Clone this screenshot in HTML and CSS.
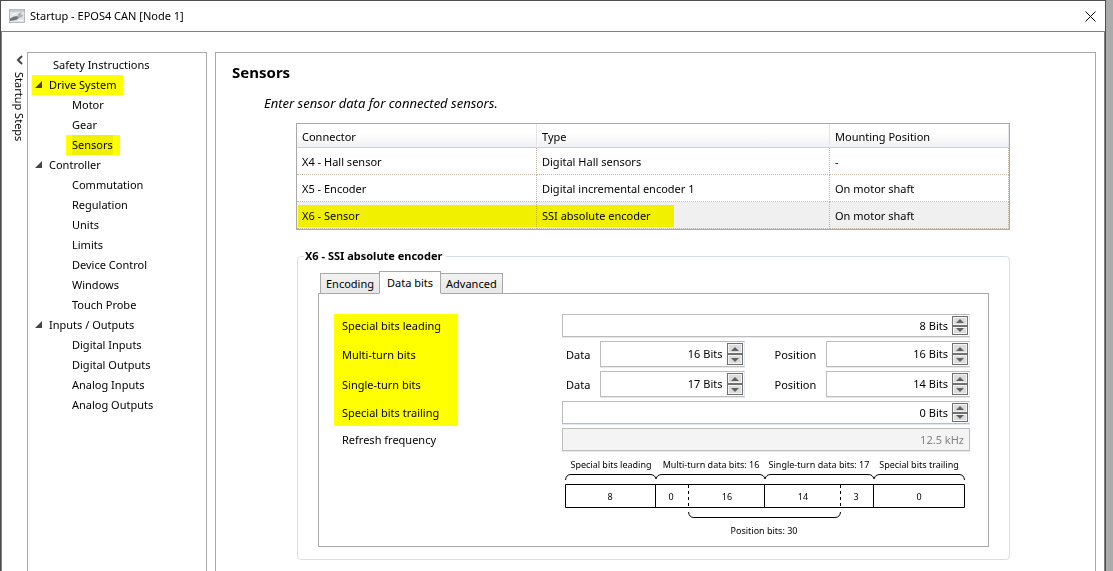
FILE: index.html
```
<!DOCTYPE html>
<html lang="en">
<head>
  <meta charset="UTF-8" />
  <meta name="viewport" content="width=device-width, initial-scale=1.0"/>
  <title>Startup - EPOS4 CAN [Node 1]</title>
  <link rel="stylesheet" href="styles.css">
</head>
<body>
  <div class="window">
    <header class="titlebar">
      <svg class="app-icon" width="16" height="14" viewBox="0 0 16 14">
        <rect x="0.5" y="0.5" width="15" height="13" fill="#e2e6e8" stroke="#b4babf"/>
        <rect x="1" y="1" width="14" height="2" fill="#c3ccd2"/>
        <path d="M1 9.500L5 7.500L9 7L10 9L7 11L1 12Z" fill="#6d767d"/>
        <path d="M8 8L10 4L13 3.500L11.500 5.500L14 6L13 8L10 9Z" fill="#a9b1b6"/>
        <path d="M3 6L7 4M9 11.500H14" stroke="#fff"/>
      </svg>
      <h1>Startup - EPOS4 CAN [Node 1]</h1>
      <button class="close" type="button" aria-label="Close">
        <svg width="11" height="11" viewBox="0 0 11 11"><path d="M0.5 0.5L10.5 10.5M10.5 0.5L0.5 10.5" stroke="#000" fill="none"/></svg>
      </button>
    </header>

    <div class="content">
      <button class="steps" type="button">
        <svg width="7" height="10" viewBox="0 0 7 10"><path d="M6 1L2 5L6 9" stroke="#444" stroke-width="2" fill="none"/></svg>
        <span>Startup Steps</span>
      </button>

      <nav class="tree">
        <ul>
          <li><a class="top" href="#safety">Safety Instructions</a></li>
          <li>
            <a class="group marked" href="#drive">Drive System</a>
            <ul>
              <li><a href="#motor">Motor</a></li>
              <li><a href="#gear">Gear</a></li>
              <li><a class="marked" href="#sensors" aria-current="page"><span class="selected">Sensors</span></a></li>
            </ul>
          </li>
          <li>
            <a class="group" href="#controller">Controller</a>
            <ul>
              <li><a href="#commutation">Commutation</a></li>
              <li><a href="#regulation">Regulation</a></li>
              <li><a href="#units">Units</a></li>
              <li><a href="#limits">Limits</a></li>
              <li><a href="#device">Device Control</a></li>
              <li><a href="#windows">Windows</a></li>
              <li><a href="#touch">Touch Probe</a></li>
            </ul>
          </li>
          <li>
            <a class="group" href="#io">Inputs / Outputs</a>
            <ul>
              <li><a href="#din">Digital Inputs</a></li>
              <li><a href="#dout">Digital Outputs</a></li>
              <li><a href="#ain">Analog Inputs</a></li>
              <li><a href="#aout">Analog Outputs</a></li>
            </ul>
          </li>
        </ul>
      </nav>

      <main>
        <h2>Sensors</h2>
        <p class="intro">Enter sensor data for connected sensors.</p>

        <table>
          <thead>
            <tr><th class="col-connector">Connector</th><th class="col-type">Type</th><th>Mounting Position</th></tr>
          </thead>
          <tbody>
            <tr><td>X4 - Hall sensor</td><td>Digital Hall sensors</td><td>-</td></tr>
            <tr><td>X5 - Encoder</td><td>Digital incremental encoder 1</td><td>On motor shaft</td></tr>
            <tr class="active"><td>X6 - Sensor</td><td>SSI absolute encoder</td><td>On motor shaft</td></tr>
          </tbody>
        </table>

        <fieldset>
          <legend>X6 - SSI absolute encoder</legend>
          <div class="tabs" role="tablist">
            <button type="button" role="tab">Encoding</button>
            <button type="button" role="tab" class="current" aria-selected="true">Data bits</button>
            <button type="button" role="tab">Advanced</button>
          </div>

          <div class="panel" role="tabpanel">
            <div class="form">
              <div class="row">
                <label class="name" for="leading">Special bits leading</label>
                <div class="spin">
                  <input id="leading" type="text" value="8 Bits">
                  <div class="arrows"><button type="button" class="up" aria-label="Up"></button><button type="button" class="down" aria-label="Down"></button></div>
                </div>
              </div>
              <div class="row tall">
                <span class="name">Multi-turn bits</span>
                <label class="data" for="multi-data">Data</label>
                <div class="spin">
                  <input id="multi-data" type="text" value="16 Bits">
                  <div class="arrows"><button type="button" class="up" aria-label="Up"></button><button type="button" class="down" aria-label="Down"></button></div>
                </div>
                <label class="position" for="multi-pos">Position</label>
                <div class="spin">
                  <input id="multi-pos" type="text" value="16 Bits">
                  <div class="arrows"><button type="button" class="up" aria-label="Up"></button><button type="button" class="down" aria-label="Down"></button></div>
                </div>
              </div>
              <div class="row tall">
                <span class="name">Single-turn bits</span>
                <label class="data" for="single-data">Data</label>
                <div class="spin">
                  <input id="single-data" type="text" value="17 Bits">
                  <div class="arrows"><button type="button" class="up" aria-label="Up"></button><button type="button" class="down" aria-label="Down"></button></div>
                </div>
                <label class="position" for="single-pos">Position</label>
                <div class="spin">
                  <input id="single-pos" type="text" value="14 Bits">
                  <div class="arrows"><button type="button" class="up" aria-label="Up"></button><button type="button" class="down" aria-label="Down"></button></div>
                </div>
              </div>
              <div class="row">
                <label class="name" for="trailing">Special bits trailing</label>
                <div class="spin">
                  <input id="trailing" type="text" value="0 Bits">
                  <div class="arrows"><button type="button" class="up" aria-label="Up"></button><button type="button" class="down" aria-label="Down"></button></div>
                </div>
              </div>
              <div class="row">
                <label class="name" for="refresh">Refresh frequency</label>
                <div class="spin readonly">
                  <input id="refresh" type="text" value="12.5 kHz" disabled>
                </div>
              </div>
            </div>

            <!-- bit layout of the SSI frame -->
            <svg class="frame" width="402" height="80" viewBox="0 0 402 80">
              <g class="line">
                <path d="M0.5 22Q1 16.5 6 16.5H85Q90 16.5 91 21Q92 16.5 97 16.5H194Q199 16.5 200 21Q201 16.5 206 16.5H303Q308 16.5 309 21Q310 16.5 315 16.5H394Q399 16.5 399.5 22"/>
                <path d="M0.5 26.5H399.5V49.5H0.5ZM90.5 26V50M199.5 26V50M308.5 26V50"/>
                <path d="M123.5 27V50M275.5 27V50" stroke-dasharray="3 3"/>
                <path d="M123.5 54Q124 59.5 129 59.5H270Q275 59.5 275.5 54"/>
              </g>
              <text x="46" y="10">Special bits leading</text>
              <text x="146" y="10">Multi-turn data bits: 16</text>
              <text x="254" y="10">Single-turn data bits: 17</text>
              <text x="354" y="10">Special bits trailing</text>
              <text x="45" y="42">8</text>
              <text x="106" y="42">0</text>
              <text x="162" y="42">16</text>
              <text x="238" y="42">14</text>
              <text x="291" y="42">3</text>
              <text x="354" y="42">0</text>
              <text x="199" y="76">Position bits: 30</text>
            </svg>
          </div>
        </fieldset>
      </main>
    </div>
  </div>
</body>
</html>
```
FILE: styles.css
```
:root {
  --line: #a9a9a9;
  --dark: #4d4d4d;
  --mark: #ffff00;
  --ui: "Noto Sans", "Open Sans", sans-serif;
}
* { box-sizing: border-box; margin: 0; padding: 0; }
body {
  font-family: var(--ui);
  font-size: 11px;
  line-height: 20px;
  color: #000;
  background: #ababab;
  padding-right: 7px;
}
button, input { font: inherit; color: inherit; }
.window {
  display: flex;
  flex-direction: column;
  min-height: 100vh;
  background: #fff;
  border: 1px solid var(--dark);
  border-bottom: none;
}

/* title bar */
.titlebar {
  display: flex;
  align-items: center;
  gap: 5px;
  height: 30px;
  padding: 0 9px 0 8px;
}
.titlebar h1 { flex: 1; font-size: 11px; font-weight: normal; }
.close { display: flex; border: none; background: none; }

.content {
  flex: 1;
  display: flex;
  border: 1px solid #808080;
  border-bottom: none;
  padding: 20px 8px 0 9px;
}

/* collapsed strip left of the tree */
.steps {
  display: flex;
  flex-direction: column;
  align-items: center;
  gap: 7px;
  width: 16px;
  padding-top: 3px;
  border: none;
  background: none;
}
.steps svg { flex: none; }
.steps span { writing-mode: vertical-rl; white-space: nowrap; }

/* tree */
.tree {
  width: 180px;
  flex: none;
  padding: 2px 0 0 4px;
  border: 1px solid var(--line);
  border-bottom: none;
}
.tree ul { list-style: none; }
.tree a {
  position: relative;
  display: block;
  width: fit-content;
  margin-left: 34px;
  padding: 0 7px 0 6px;
  color: inherit;
  text-decoration: none;
}
.tree a.top { margin-left: 15px; }
.tree a.group { margin-left: 0; padding-left: 17px; }
.tree a.group::before {
  content: "";
  position: absolute;
  left: 3px;
  top: 6px;
  width: 7px;
  height: 7px;
  background: #444;
  clip-path: polygon(100% 0, 100% 100%, 0 100%);
}
.tree a.marked { background: var(--mark); }
.selected { display: block; background: #f0f000; }

/* sensor page */
main {
  flex: 1;
  min-width: 0;
  margin-left: 8px;
  padding: 10px 85px 0 16px;
  border: 1px solid var(--line);
  border-bottom: none;
}
h2 { font-size: 15px; line-height: 18px; }
.intro {
  margin: 12px 0 10px 32px;
  font-size: 13px;
  font-style: italic;
}
table {
  width: calc(100% - 64px);
  margin-left: 64px;
  border: 1px solid var(--line);
  border-collapse: separate;
  border-spacing: 0;
  table-layout: fixed;
}
th, td {
  padding: 2px 5px 0;
  text-align: left;
  font-weight: normal;
}
th {
  height: 24px;
  border-right: 1px solid #e3e5e8;
  border-bottom: 1px solid #d0d0d0;
  background: linear-gradient(#fff 40%, #f0f1f4);
}
td {
  height: 27px;
  border-right: 1px dotted #bdb5a2;
  border-bottom: 1px dotted #bdb5a2;
}
.col-connector { width: 240px; }
.col-type { width: 293px; }
tr.active { background: #f0f0f0; }
tr.active td:first-child { position: relative; }
/* marker stroke over the active row */
tr.active td:first-child::after {
  content: "";
  position: absolute;
  left: 1px;
  top: 3px;
  width: 376px;
  height: 22px;
  background: var(--mark);
  mix-blend-mode: multiply;
}

fieldset {
  min-width: 0;
  margin: 16px 0 0 65px;
  padding: 0 20px 12px;
  border: 1px solid #d5dfe5;
  border-radius: 4px;
}
legend {
  margin-left: -14px;
  padding: 0 4px 0 1px;
  font-weight: bold;
}
.tabs {
  position: relative;
  display: flex;
  align-items: flex-end;
  margin: 5px 0 -1px 2px;
}
.tabs button {
  height: 21px;
  margin-right: -1px;
  padding: 0 5px;
  line-height: 19px;
  border: 1px solid var(--line);
  background: linear-gradient(#f2f2f2, #e8e8e8);
}
.tabs .current {
  height: 23px;
  padding: 0 7px;
  border-bottom-color: #fff;
  background: #fff;
  z-index: 1;
}
.panel {
  border: 1px solid var(--line);
  padding: 20px 18px 8px 23px;
}

/* data bits */
.form {
  position: relative;
  display: flex;
  flex-direction: column;
  gap: 4px;
}
.form::before {
  content: "";
  position: absolute;
  left: -8px;
  top: 0;
  width: 124px;
  height: 112px;
  background: var(--mark);
  mix-blend-mode: multiply;
}
.row { display: flex; align-items: center; height: 23px; }
.row.tall { height: 26px; }
.tall .name, .tall label { padding-top: 2px; }
.name { width: 220px; flex: none; }
.data { width: 38px; flex: none; padding-left: 4px; }
.position { width: 81px; flex: none; padding-left: 30px; }
.spin {
  flex: 1;
  display: flex;
  align-self: stretch;
  min-width: 0;
  padding: 1px;
  border: 1px solid #bcbcbc;
  border-right-color: #e3e9ef;
  box-shadow: 0 1px #e3e9ef;
}
.spin input {
  flex: 1;
  min-width: 0;
  padding-right: 4px;
  border: none;
  background: none;
  text-align: right;
}
.spin.readonly { background: #f4f4f4; border-color: #bcbcbc; }
.readonly input { color: #838383; }
.arrows {
  display: flex;
  flex-direction: column;
  width: 16px;
}
.arrows button {
  flex: 1;
  display: flex;
  align-items: center;
  justify-content: center;
  border: 1px solid #707070;
  background: #dcdcdc;
  box-shadow: inset 0 0 0 1px #f4f4f4;
}
.arrows button::before {
  content: "";
  border: 4px solid transparent;
  border-top: none;
  border-bottom: 4px solid #606060;
}
.arrows .down::before {
  border-top: 4px solid #606060;
  border-bottom: none;
}

.frame { display: block; margin: 7px 0 0 223px; }
.frame text { font-size: 9px; text-anchor: middle; }
.line { fill: none; stroke: #000; }
```
